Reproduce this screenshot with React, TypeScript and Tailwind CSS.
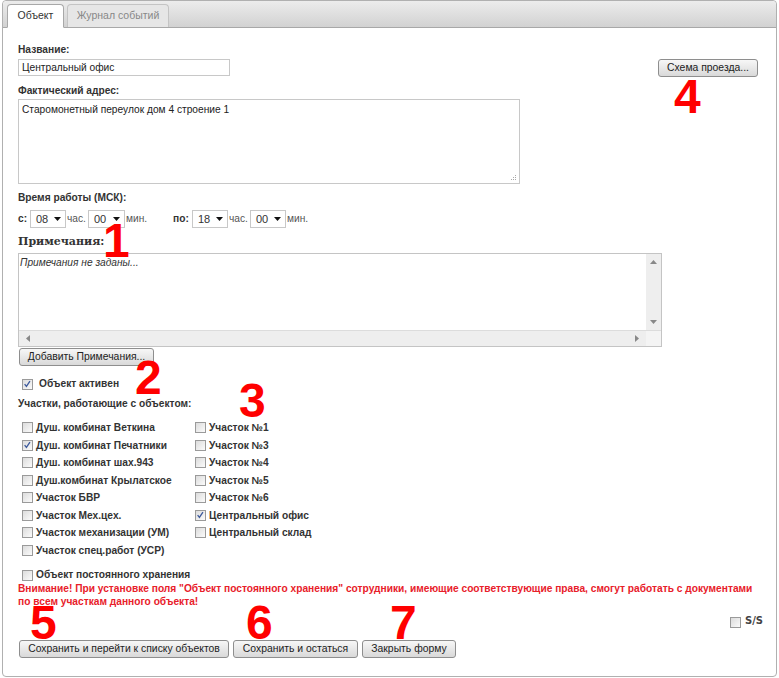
import React from "react";

function Cb({ checked = false }: { checked?: boolean }) {
  return (
    <span className="relative inline-block w-[11px] h-[11px] shrink-0 border border-[#9a9a9a] bg-gradient-to-br from-[#dcdcdc] to-[#fbfbfb]">
      {checked && (
        <svg viewBox="0 0 11 11" className="absolute left-0 top-0 w-[9px] h-[9px]">
          <path d="M2 5 L4.2 7.8 L8.5 1.5" fill="none" stroke="#3d5a9c" strokeWidth="1.6" />
        </svg>
      )}
    </span>
  );
}

function Sel({ v, w }: { v: string; w: string }) {
  return (
    <span className={`${w} h-[18px] border border-[#c8c8c8] bg-white flex items-center justify-between pl-[5px] pr-[4px] shrink-0`}>
      <span className="text-[11px] text-[#333]">{v}</span>
      <svg viewBox="0 0 7 4" className="w-[7px] h-[4px]">
        <path d="M0 0 L7 0 L3.5 4 Z" fill="#111" />
      </svg>
    </span>
  );
}

function Btn({ children, w }: { children: React.ReactNode; w: string }) {
  return (
    <div className={`${w} h-[18px] border border-[#8e8e8e] rounded-[3px] bg-gradient-to-b from-[#f7f7f7] to-[#d9d9d9] flex items-center justify-center text-[10.4px] text-[#222] shrink-0 whitespace-nowrap`}>
      {children}
    </div>
  );
}

function CbRow({ label, checked = false }: { label: string; checked?: boolean }) {
  return (
    <div className="h-[17.5px] flex items-center">
      <Cb checked={checked} />
      <span className="ml-[3px] font-bold text-[#333]">{label}</span>
    </div>
  );
}

function Num({ n, cls }: { n: string; cls: string }) {
  return (
    <div className={`absolute ${cls} text-[48px] leading-[48px] font-bold text-[#ff0000]`}>{n}</div>
  );
}

export default function App() {
  const left = [
    ["Душ. комбинат Веткина", false],
    ["Душ. комбинат Печатники", true],
    ["Душ. комбинат шах.943", false],
    ["Душ.комбинат Крылатское", false],
    ["Участок БВР", false],
    ["Участок Мех.цех.", false],
    ["Участок механизации (УМ)", false],
    ["Участок спец.работ (УСР)", false],
  ] as [string, boolean][];
  const right = [
    ["Участок №1", false],
    ["Участок №3", false],
    ["Участок №4", false],
    ["Участок №5", false],
    ["Участок №6", false],
    ["Центральный офис", true],
    ["Центральный склад", false],
  ] as [string, boolean][];

  return (
    <div className="relative w-[779px] h-[678px] bg-white overflow-hidden font-['Liberation_Sans',Arial,sans-serif] text-[10.2px] text-[#333]">
      <div className="ml-[2px] w-[775px] h-[677px] border border-[#b0b0b0] rounded-[4px] flex flex-col">
        {/* tabs header */}
        <div className="h-[27px] shrink-0 bg-gradient-to-b from-[#ececec] to-[#d2d2d2] border-b border-[#a8a8a8] rounded-t-[4px] flex items-end pl-[4px] gap-[3px]">
          <div className="h-[24px] w-[57px] -mb-px bg-white border border-[#a8a8a8] border-b-white rounded-t-[4px] flex items-center justify-center text-[10.5px] text-[#333]">
            Объект
          </div>
          <div className="h-[23px] w-[102px] bg-[#e6e6e6] border border-[#c4c4c4] border-b-0 rounded-t-[4px] flex items-center justify-center text-[10.5px] text-[#888]">
            Журнал событий
          </div>
        </div>

        {/* content */}
        <div className="pl-[15px] flex flex-col">
          <div className="mt-[15px] leading-[14px] font-bold">Название:</div>
          <div className="mt-[2px] flex items-start">
            <div className="w-[212px] h-[17px] border border-[#c8c8c8] flex items-center pl-[3px] text-[#222]">
              Центральный офис
            </div>
            <div className="ml-auto mr-[18px]">
              <Btn w="w-[100px]">Схема проезда...</Btn>
            </div>
          </div>
          <div className="mt-[7px] leading-[14px] font-bold">Фактический адрес:</div>
          <div className="mt-[1px] relative w-[502px] h-[85px] border border-[#c8c8c8] pl-[3px] pt-[2px] text-[#222]">
            Старомонетный переулок дом 4 строение 1
            <svg viewBox="0 0 7 7" className="absolute right-[2px] bottom-[2px] w-[7px] h-[7px]">
              <rect x="5" y="1" width="1" height="1" fill="#aaa" />
              <rect x="3" y="3" width="1" height="1" fill="#aaa" />
              <rect x="5" y="3" width="1" height="1" fill="#aaa" />
              <rect x="1" y="5" width="1" height="1" fill="#aaa" />
              <rect x="3" y="5" width="1" height="1" fill="#aaa" />
              <rect x="5" y="5" width="1" height="1" fill="#aaa" />
            </svg>
          </div>
          <div className="mt-[7px] leading-[14px] font-bold">Время работы (МСК):</div>
          <div className="mt-[5px] h-[18px] flex items-center">
            <span className="w-[12px] font-bold">с:</span>
            <Sel v="08" w="w-[36px]" />
            <span className="w-[22px] pl-[1px] text-[#555]">час.</span>
            <Sel v="00" w="w-[37px]" />
            <span className="w-[48px] pl-[1px] text-[#555]">мин.</span>
            <span className="w-[19px] font-bold">по:</span>
            <Sel v="18" w="w-[36px]" />
            <span className="w-[22px] pl-[1px] text-[#555]">час.</span>
            <Sel v="00" w="w-[36px]" />
            <span className="pl-[1px] text-[#555]">мин.</span>
          </div>
          <div className="mt-[6px] h-[16px] leading-[16px] font-['DejaVu_Serif',Georgia,serif] font-bold text-[11px] text-[#333]">
            Примечания:
          </div>
          <div className="mt-[3px] w-[644px] h-[94px] border border-[#c4c4c4] flex flex-col">
            <div className="flex flex-1">
              <div className="flex-1 pl-[1px] pt-[1px] italic text-[#333]">Примечания не заданы...</div>
              <div className="w-[15px] bg-[#eeeeee] flex flex-col items-center justify-between py-[6px]">
                <svg viewBox="0 0 7 4" className="w-[7px] h-[4px]"><path d="M0 4 L7 4 L3.5 0 Z" fill="#888" /></svg>
                <svg viewBox="0 0 7 4" className="w-[7px] h-[4px]"><path d="M0 0 L7 0 L3.5 4 Z" fill="#888" /></svg>
              </div>
            </div>
            <div className="h-[16px] flex border-t border-[#dcdcdc]">
              <div className="flex-1 bg-[#eeeeee] flex items-center justify-between pl-[7px] pr-[7px]">
                <svg viewBox="0 0 4 7" className="w-[4px] h-[7px]"><path d="M4 0 L4 7 L0 3.5 Z" fill="#888" /></svg>
                <svg viewBox="0 0 4 7" className="w-[4px] h-[7px]"><path d="M0 0 L0 7 L4 3.5 Z" fill="#888" /></svg>
              </div>
              <div className="w-[15px] bg-[#f4f4f4]" />
            </div>
          </div>
          <div className="mt-[1px] ml-[1px]">
            <Btn w="w-[135px]">Добавить Примечания...</Btn>
          </div>
          <div className="mt-[11px] ml-[4px] h-[14px] flex items-center">
            <Cb checked />
            <span className="ml-[6px] font-bold">Объект активен</span>
          </div>
          <div className="mt-[6px] leading-[14px] font-bold">Участки, работающие с объектом:</div>
          <div className="mt-[8px] ml-[4px] flex">
            <div className="w-[173px] flex flex-col">
              {left.map(([l, c]) => (
                <CbRow key={l} label={l} checked={c} />
              ))}
            </div>
            <div className="flex flex-col">
              {right.map(([l, c]) => (
                <CbRow key={l} label={l} checked={c} />
              ))}
            </div>
          </div>
          <div className="mt-[9px] ml-[4px] h-[14px] flex items-center">
            <Cb />
            <span className="ml-[3px] font-bold">Объект постоянного хранения</span>
          </div>
          <div className="leading-[13px] font-bold text-[#e8202a] whitespace-nowrap">
            Внимание! При установке поля "Объект постоянного хранения" сотрудники, имеющие соответствующие права, смогут работать с документами
            <br />
            по всем участкам данного объекта!
          </div>
          <div className="h-[24px] flex items-end justify-end pr-[13px] pb-[4px]">
            <Cb />
            <span className="ml-[4px] text-[10px] font-bold text-[#444] font-['DejaVu_Sans',sans-serif]">S/S</span>
          </div>
          <div className="mt-[8px] ml-[1px] flex gap-[4px]">
            <Btn w="w-[210px]">Сохранить и перейти к списку объектов</Btn>
            <Btn w="w-[125px]">Сохранить и остаться</Btn>
            <Btn w="w-[94px]">Закрыть форму</Btn>
          </div>
        </div>
      </div>

      <Num n="1" cls="left-[103px] top-[217px]" />
      <Num n="2" cls="left-[135px] top-[354px]" />
      <Num n="3" cls="left-[239px] top-[377px]" />
      <Num n="4" cls="left-[674px] top-[73px]" />
      <Num n="5" cls="left-[30px] top-[599px]" />
      <Num n="6" cls="left-[246px] top-[599px]" />
      <Num n="7" cls="left-[390px] top-[599px]" />
    </div>
  );
}
